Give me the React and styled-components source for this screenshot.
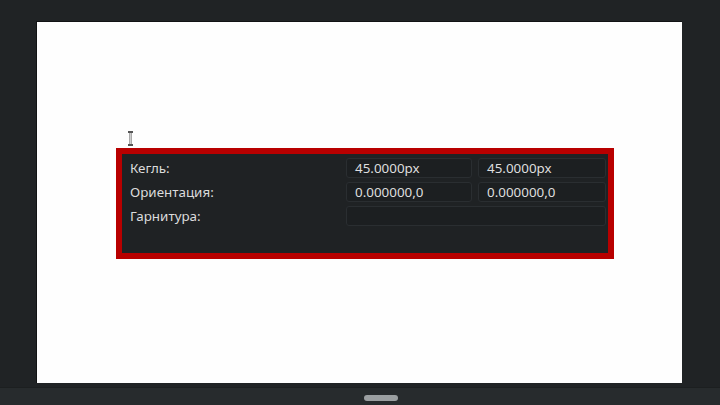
import React from 'react';
import styled, { createGlobalStyle } from 'styled-components';

const GlobalStyle = createGlobalStyle`
    html, body {
        margin: 0;
        padding: 0;
        background: #202325;
        font-family: "Noto Sans", "Open Sans", sans-serif;
    }
`;

const Screen = styled.div`
    width: 720px;
    height: 405px;
    display: flex;
    flex-direction: column;
    background: #202325;
    overflow: hidden;
`;

const Workspace = styled.div`
    flex: 1;
    padding: 21px 38px 4px 36px;
    display: flex;
`;

const Page = styled.div`
    position: relative;
    width: 646px;
    height: 362px;
    background: #fefefe;
    box-sizing: border-box;
    border-top: 1px solid #111314;
    border-left: 1px solid #111314;
    padding: 126px 0 0 79px;
`;

const Cursor = styled.svg`
    position: absolute;
    left: 90px;
    top: 109px;
`;

const Panel = styled.div`
    width: 498px;
    height: 111px;
    box-sizing: border-box;
    border: 6px solid #b80000;
    background: #1f2224;
    display: grid;
    grid-template-columns: 210px 126px 128px;
    grid-auto-rows: 20px;
    column-gap: 6px;
    row-gap: 4px;
    padding: 4px 2px 0 8px;
    align-content: start;
`;

const Label = styled.div`
    color: #dcdcdc;
    font-size: 13.4px;
    line-height: 20px;
`;

const Field = styled.div`
    grid-column: ${p => (p.$wide ? 'span 2' : 'auto')};
    box-sizing: border-box;
    border: 1px solid #2a2e31;
    border-radius: 3px;
    background: #1c1f21;
    color: #dedede;
    font-size: 13.4px;
    line-height: 18px;
    padding-left: 8px;
    white-space: nowrap;
`;

const BottomBar = styled.div`
    height: 18px;
    background: #272b2d;
    border-top: 1px solid #1c1f20;
    display: flex;
    justify-content: center;
    align-items: center;
    padding-left: 42px;
`;

const Handle = styled.div`
    width: 34px;
    height: 6px;
    border-radius: 3px;
    background: #9b9fa1;
    margin-top: 3px;
`;

const App = () => {
    return (
        <Screen>
            <GlobalStyle />
            <Workspace>
                <Page>
                    <Cursor width="7" height="15" viewBox="0 0 7 15">
                        <path d="M1 1h5M1 14h5M3.5 1v13" stroke="#555" strokeWidth="2" fill="none" />
                        <path d="M3.5 2v11" stroke="#ccc" strokeWidth="1" />
                    </Cursor>
                    <Panel>
                        <Label>Кегль:</Label>
                        <Field>45.0000px</Field>
                        <Field>45.0000px</Field>
                        <Label>Ориентация:</Label>
                        <Field>0.000000,0</Field>
                        <Field>0.000000,0</Field>
                        <Label>Гарнитура:</Label>
                        <Field $wide></Field>
                    </Panel>
                </Page>
            </Workspace>
            <BottomBar>
                <Handle />
            </BottomBar>
        </Screen>
    );
};

export default App;
